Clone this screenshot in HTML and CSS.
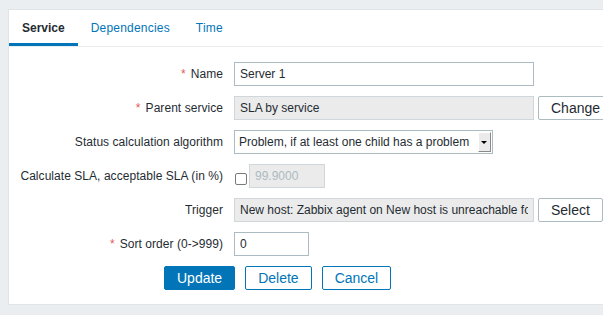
FILE: index.html
```html
<!DOCTYPE html>
<html lang="en">
<head>
  <meta charset="UTF-8" />
  <title>Service</title>
  <link rel="stylesheet" href="styles.css">
</head>
<body>

<div class="panel">
  <ul class="tabs">
    <li class="active">Service</li>
    <li>Dependencies</li>
    <li>Time</li>
  </ul>

  <form class="form-grid" onsubmit="return false">
    <label class="required">Name</label>
    <div class="field"><input type="text" class="w300" value="Server 1"></div>

    <label class="required">Parent service</label>
    <div class="field">
      <input type="text" class="w300" value="SLA by service" readonly>
      <button type="button" class="btn-alt">Change</button>
    </div>

    <label>Status calculation algorithm</label>
    <div class="field">
      <div class="select">
        <span class="select-text">Problem, if at least one child has a problem</span>
        <span class="select-arrow"></span>
      </div>
    </div>

    <label>Calculate SLA, acceptable SLA (in %)</label>
    <div class="field">
      <span class="checkbox"></span>
      <input type="text" class="w76 disabled" value="99.9000" readonly>
    </div>

    <label>Trigger</label>
    <div class="field">
      <input type="text" class="w300" value="New host: Zabbix agent on New host is unreachable for 5 minutes" readonly>
      <button type="button" class="btn-alt">Select</button>
    </div>

    <label class="required">Sort order (0-&gt;999)</label>
    <div class="field"><input type="text" class="w75" value="0"></div>

    <div class="buttons">
      <button type="submit" class="btn-primary">Update</button>
      <button type="button" class="btn-outline">Delete</button>
      <button type="button" class="btn-outline">Cancel</button>
    </div>
  </form>
</div>

</body>
</html>
```

FILE: styles.css
```css
body {
  margin: 0;
  background-color: #ebeef0;
  font-family: "Liberation Sans", Arial, sans-serif;
  font-size: 12px;
  color: #1f2c33;
  overflow: hidden;
}

.panel {
  margin: 9px -20px 0 8px;
  background: #fff;
  border: 1px solid #dfe4e7;
  padding-bottom: 14px;
}

.tabs {
  list-style: none;
  margin: 0;
  padding: 0;
  display: flex;
  border-bottom: 1px solid #ebeef0;
}

.tabs li {
  padding: 11px 13px 8px;
  line-height: 14px;
  color: #0275b8;
  border-bottom: 3px solid transparent;
  letter-spacing: 0.2px;
}

.tabs li.active {
  color: #1f2c33;
  font-weight: bold;
  letter-spacing: 0;
  border-bottom-color: #0275b8;
}

.form-grid {
  display: grid;
  grid-template-columns: 214px 1fr;
  grid-auto-rows: 24px;
  column-gap: 11px;
  row-gap: 10px;
  padding-top: 15px;
}

.form-grid label {
  text-align: right;
  align-self: center;
  white-space: nowrap;
  letter-spacing: 0.05px;
}

.form-grid label.required::before {
  content: "*";
  color: #e45959;
  margin-right: 5px;
}

.field {
  display: flex;
  align-items: center;
  gap: 4px;
}

input[type="text"] {
  box-sizing: border-box;
  height: 24px;
  padding: 0 5px;
  border: 1px solid #acbbc2;
  font-family: inherit;
  font-size: 12px;
  color: #1f2c33;
  background: #fff;
  outline: none;
}

input[readonly] {
  background: #ebebeb;
  border-color: #cfd7db;
}

input.disabled {
  color: #acbbc2;
}

.w300 { width: 300px; }
.w76 { width: 76px; }
.w75 { width: 75px; }

.select {
  box-sizing: border-box;
  width: 259px;
  height: 24px;
  border: 1px solid #acbbc2;
  display: flex;
  align-items: center;
  padding: 1px 1px 1px 4px;
}

.select-text {
  flex: 1;
  white-space: nowrap;
  overflow: hidden;
}

.select-arrow {
  box-sizing: border-box;
  width: 13px;
  height: 20px;
  background: #ebebeb;
  border-right: 1px solid #8a8a8a;
  border-bottom: 1px solid #8a8a8a;
  border-top: 1px solid #fff;
  border-left: 1px solid #fff;
  position: relative;
}

.select-arrow::after {
  content: "";
  position: absolute;
  left: 2px;
  top: 8px;
  border-left: 3px solid transparent;
  border-right: 3px solid transparent;
  border-top: 3px solid #000;
}

.checkbox {
  box-sizing: border-box;
  width: 12px;
  height: 12px;
  border: 1px solid #7a7a7a;
  border-radius: 2px;
  margin: 6px -2px 0 1px;
  background: #fff;
}

button {
  box-sizing: border-box;
  height: 24px;
  padding: 0 12px;
  font-family: inherit;
  font-size: 14px;
  border-radius: 2px;
  cursor: pointer;
}

.btn-alt {
  background: #fff;
  color: #1f2c33;
  border: 1px solid #acbbc2;
}

.btn-primary {
  background: #0275b8;
  color: #fff;
  border: 1px solid #0275b8;
}

.btn-outline {
  background: #fff;
  color: #0275b8;
  border: 1px solid #0275b8;
}

.buttons {
  grid-column: 1 / 3;
  display: flex;
  gap: 10px;
  padding-left: 155px;
}
```
